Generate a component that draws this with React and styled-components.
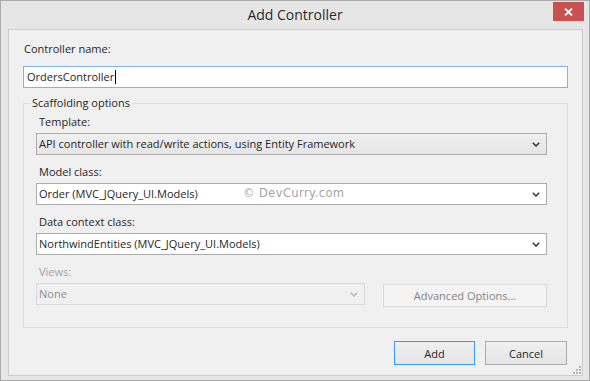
import React from 'react';
import styled, { createGlobalStyle } from 'styled-components';

const GlobalStyle = createGlobalStyle`
  html, body {
    margin: 0;
    padding: 0;
    background: #e6e6e6;
  }
  * {
    box-sizing: border-box;
  }
`;

// Window frame
const Window = styled.div`
  width: 590px;
  height: 381px;
  border: 1px solid #a9a9a9;
  background: #e6e6e6;
  display: flex;
  flex-direction: column;
  padding: 0 6px 4px 7px;
  font-family: "Open Sans", "Noto Sans", sans-serif;
  font-size: 11px;
  color: #262626;
`;

const TitleBar = styled.div`
  height: 28px;
  display: grid;
  grid-template-columns: 1fr auto 1fr;
  align-items: start;
  margin: 0 -6px 0 -7px;
`;

const Title = styled.div`
  grid-column: 2;
  font-size: 14px;
  line-height: 28px;
  color: #2b2b2b;
`;

const CloseButton = styled.button`
  grid-column: 3;
  justify-self: end;
  width: 31px;
  height: 19px;
  margin: 1px 5px 0 0;
  border: none;
  padding: 0;
  background: #c75050;
  display: flex;
  align-items: center;
  justify-content: center;
`;

const Client = styled.div`
  flex: 1;
  position: relative;
  background: #f0f0f0;
  border: 1px solid #cdcdcd;
  padding: 11px 14px 10px 14px;
  display: flex;
  flex-direction: column;
`;

const Label = styled.div`
  height: 16px;
  line-height: 16px;
  padding-left: ${(p) => p.$indent || 1}px;
  margin-bottom: ${(p) => p.$gap || 3}px;
  color: ${(p) => (p.$disabled ? '#a3a3a3' : '#262626')};
`;

const TextBox = styled.div`
  height: 22px;
  border: 1px solid #7eb4ea;
  background: #fff;
  padding: 0 3px;
  display: flex;
  align-items: center;
  line-height: 20px;
`;

const Caret = styled.span`
  display: inline-block;
  width: 1px;
  height: 14px;
  background: #000;
  margin-left: 1px;
`;

const GroupBox = styled.fieldset`
  margin: 7px 0 0 0;
  border: 1px solid #dcdcdc;
  padding: 3px 20px 20px 12px;
  display: flex;
  flex-direction: column;
  gap: 9px;
`;

const Legend = styled.legend`
  margin-left: -6px;
  padding: 0 2px;
  height: 16px;
  line-height: 16px;
`;

const Field = styled.div`
  display: flex;
  flex-direction: column;
`;

const Combo = styled.div`
  height: 22px;
  border: 1px solid ${(p) => (p.$disabled ? '#d9d9d9' : '#acacac')};
  background: ${(p) =>
    p.$variant === 'button'
      ? 'linear-gradient(#f0f0f0, #e5e5e5)'
      : p.$disabled
      ? '#f0f0f0'
      : '#fff'};
  color: ${(p) => (p.$disabled ? '#8d8d8d' : '#262626')};
  display: flex;
  align-items: center;
  padding: 0 6px 0 2px;
  line-height: 20px;
  width: ${(p) => p.$width || 'auto'};
`;

const ComboText = styled.span`
  flex: 1;
  white-space: nowrap;
`;

const Row = styled.div`
  display: flex;
  align-items: flex-start;
  gap: 18px;
`;

const Button = styled.button`
  height: ${(p) => p.$height || 24}px;
  width: ${(p) => p.$width}px;
  border: 1px solid
    ${(p) => (p.$default ? '#3399ff' : p.$disabled ? '#d9d9d9' : '#acacac')};
  background: ${(p) => (p.$disabled ? '#f4f4f4' : 'linear-gradient(#f0f0f0, #e5e5e5)')};
  color: ${(p) => (p.$disabled ? '#838383' : '#262626')};
  font-family: inherit;
  font-size: 11px;
  padding: 0;
  margin-top: ${(p) => p.$offset || 0}px;
`;

const ButtonBar = styled.div`
  display: flex;
  justify-content: flex-end;
  gap: 10px;
  margin-top: 13px;
  padding-right: 1px;
`;

const Watermark = styled.div`
  position: absolute;
  left: 234px;
  top: 156px;
  font-family: "DejaVu Sans", Verdana, sans-serif;
  font-size: 11.5px;
  color: #a4a4a4;
  letter-spacing: 0.4px;
`;

const Grip = styled.svg`
  position: absolute;
  right: 1px;
  bottom: 1px;
`;

function Chevron({ color = '#333' }) {
  return (
    <svg width="8" height="5" viewBox="0 0 8 5">
      <path d="M0.8 0.8 L4 4 L7.2 0.8" fill="none" stroke={color} strokeWidth="1.5" />
    </svg>
  );
}

function Select({ value, variant, disabled, width }) {
  return (
    <Combo $variant={variant} $disabled={disabled} $width={width}>
      <ComboText>{value}</ComboText>
      <Chevron color={disabled ? '#b8b8b8' : '#333'} />
    </Combo>
  );
}

export default function App() {
  return (
    <>
      <GlobalStyle />
      <Window>
        <TitleBar>
          <Title>Add Controller</Title>
          <CloseButton>
            <svg width="9" height="8" viewBox="0 0 9 8">
              <path d="M1 0.5 L8 7.5 M8 0.5 L1 7.5" stroke="#fff" strokeWidth="1.8" />
            </svg>
          </CloseButton>
        </TitleBar>
        <Client>
          <Label $gap={9}>Controller name:</Label>
          <TextBox>
            OrdersController
            <Caret />
          </TextBox>
          <GroupBox>
            <Legend>Scaffolding options</Legend>
            <Field>
              <Label $indent={3}>Template:</Label>
              <Select
                variant="button"
                value="API controller with read/write actions, using Entity Framework"
              />
            </Field>
            <Field>
              <Label $indent={3}>Model class:</Label>
              <Select value="Order (MVC_JQuery_UI.Models)" />
            </Field>
            <Field>
              <Label $indent={3}>Data context class:</Label>
              <Select value="NorthwindEntities (MVC_JQuery_UI.Models)" />
            </Field>
            <Field>
              <Label $indent={3} $disabled>
                Views:
              </Label>
              <Row>
                <Select value="None" disabled width="329px" />
                <Button $disabled $width={164} $height={23} $offset={1}>
                  Advanced Options...
                </Button>
              </Row>
            </Field>
          </GroupBox>
          <ButtonBar>
            <Button $default $width={81}>
              Add
            </Button>
            <Button $width={82}>Cancel</Button>
          </ButtonBar>
          <Watermark>© DevCurry.com</Watermark>
          <Grip width="9" height="9" viewBox="0 0 9 9">
            <g fill="#b5b5b5">
              <rect x="7" y="1" width="2" height="2" />
              <rect x="4" y="4" width="2" height="2" />
              <rect x="7" y="4" width="2" height="2" />
              <rect x="1" y="7" width="2" height="2" />
              <rect x="4" y="7" width="2" height="2" />
              <rect x="7" y="7" width="2" height="2" />
            </g>
          </Grip>
        </Client>
      </Window>
    </>
  );
}
